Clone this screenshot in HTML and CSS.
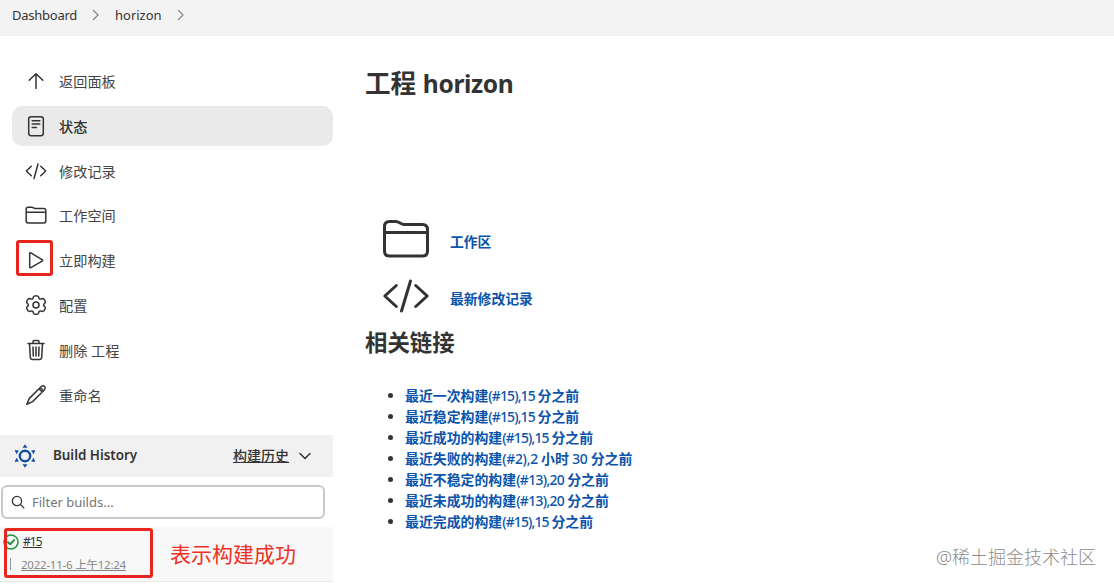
FILE: index.html
```html
<!DOCTYPE html>
<html lang="zh-CN">
<head>
  <meta charset="utf-8">
  <title>horizon [Jenkins]</title>
  <link rel="stylesheet" href="styles.css">
</head>
<body>
  <div class="breadcrumbs">
    <a class="crumb-dashboard">Dashboard</a>
    <svg class="crumb-arrow" viewBox="0 0 8 12"><path d="M1.5 1.5 6 6l-4.5 4.5"/></svg>
    <a class="crumb-project">horizon</a>
    <svg class="crumb-arrow" viewBox="0 0 8 12"><path d="M1.5 1.5 6 6l-4.5 4.5"/></svg>
  </div>

  <div class="page">
    <div class="side-panel">
      <div class="tasks">
        <a class="task">
          <svg class="icon" viewBox="0 0 24 24"><path d="M12 19.5V5M5.2 11.3 12 4.7l6.8 6.6"/></svg>
          <span>返回面板</span>
        </a>
        <a class="task active">
          <svg class="icon" viewBox="0 0 24 24"><rect x="4.7" y="2.7" width="14.6" height="19" rx="2.4"/><path d="M8.2 6.8h7.6M8.2 10h7.6M8.2 13.5h4.3"/></svg>
          <span>状态</span>
        </a>
        <a class="task">
          <svg class="icon" viewBox="0 0 24 24"><path d="M7.3 7.3 2.3 12l5 4.700M16.700 7.300l5 4.700-5 4.700M14 5l-4 14.500"/></svg>
          <span>修改记录</span>
        </a>
        <a class="task">
          <svg class="icon" viewBox="0 0 24 24"><path d="M2.200 18V6.200q0-1.900 1.900-1.900h3.800c1.500 0 1.800 1.100 3.300 1.100h8.700q1.900 0 1.900 1.900V18q0 1.900-1.900 1.900H4.100q-1.900 0-1.900-1.900zM2.200 9.300h19.600"/></svg>
          <span>工作空间</span>
        </a>
        <a class="task">
          <svg class="icon" viewBox="0 0 24 24"><path d="M5.700 5.500v13.400q0 1.300 1.200.7l11.200-6.500q1.100-.7 0-1.400L6.900 4.900q-1.200-.6-1.200.6z"/></svg>
          <span>立即构建</span>
        </a>
        <a class="task">
          <svg class="icon" viewBox="0 0 24 24"><circle cx="12" cy="12" r="3"/><path d="M9.500 3.800Q10 2.700 12 2.700t2.500 1.100l.5 1.600q.8.900 2 .5l1.700-.3q1.200 0 2.100 1.700t.2 2.700l-1.200 1.200q-.5.800 0 1.600l1.200 1.200q.7 1-.2 2.700t-2.100 1.700L17 18.100q-1.200-.4-2 .5l-.5 1.600q-.5 1.100-2.500 1.100t-2.500-1.100L9 18.600q-.8-.9-2-.5l-1.700.3q-1.200 0-2.100-1.700T3 14l1.200-1.200q.5-.8 0-1.600L3 10q-.7-1 .2-2.700t2.100-1.700l1.700.3q1.200.4 2-.5z"/></svg>
          <span>配置</span>
        </a>
        <a class="task">
          <svg class="icon" viewBox="0 0 24 24"><path d="M4 5.500h16M5.500 5.500l.8 13.800q.2 2.200 2.200 2.200h7q2 0 2.200-2.200l.8-13.800M9 5.500V3.700q0-1.100 1.100-1.100h3.800q1.100 0 1.100 1.100v1.800M9 9l.3 9M12 9v9M15 9l-.3 9"/></svg>
          <span>删除 工程</span>
        </a>
        <a class="task">
          <svg class="icon" viewBox="0 0 24 24"><path d="M16.300 4.500 5.400 15.400l-2.600 5.800 5.800-2.600L19.500 7.700M16.300 4.500l1.300-1.200q1.600-1.100 2.900.2t.2 2.900l-1.200 1.300zM15 5.800 18.200 9"/></svg>
          <span>重命名</span>
        </a>
      </div>

      <div class="history">
        <div class="history-header">
          <svg class="weather" viewBox="0 0 24 24">
            <circle cx="12" cy="12" r="5.200"/>
            <path d="M12 .2l2.500 3.600h-5zM12 23.800l2.500-3.600h-5zM1.700 6l4.200.4-2.500 3.900zM22.300 6l-4.200.4 2.500 3.900zM1.700 18l4.200-.4-2.500-3.900zM22.300 18l-4.200-.4 2.500-3.900z"/>
          </svg>
          <span class="history-title">Build History</span>
          <a class="trend">构建历史</a>
          <svg class="chevron" viewBox="0 0 12 8"><path d="M1 1.500 6 6.500l5-5"/></svg>
        </div>
        <div class="search">
          <svg class="search-icon" viewBox="0 0 16 16"><circle cx="6.800" cy="6.800" r="5.300"/><path d="m10.700 10.700 4 4"/></svg>
          <input type="text" placeholder="Filter builds...">
        </div>
        <div class="build">
          <div class="build-row">
            <svg class="success" viewBox="0 0 16 16"><circle cx="8" cy="8" r="7"/><path d="m5 8.200 2.200 2.100L11 6.100"/></svg>
            <a class="build-number">#15</a>
          </div>
          <div class="build-row">
            <span class="build-bar"></span>
            <a class="build-date">2022-11-6 上午12:24</a>
          </div>
        </div>
      </div>
    </div>

    <div class="main-panel">
      <h1>工程 <span class="project-name">horizon</span></h1>
      <div class="shortcuts">
        <svg class="icon-big" viewBox="0 0 48 48"><path d="M2.500 36V11.500q0-5 5-5h6c4 0 5 3 8.500 3h18.500q5 0 5 5V36q0 5-5 5h-33q-5 0-5-5zM2.500 17.500h43"/></svg>
        <a>工作区</a>
        <svg class="icon-big" viewBox="0 0 48 48"><path d="M14.300 13.500 2.800 24l11.500 10.500M33.700 13.500 45.200 24 33.700 34.500M28.500 9l-9 30"/></svg>
        <a>最新修改记录</a>
      </div>
      <h2>相关链接</h2>
      <ul class="permalinks">
        <li><a>最近一次构建<span class="num tight">(#15),15 </span>分之前</a></li>
        <li><a>最近稳定构建<span class="num tight">(#15),15 </span>分之前</a></li>
        <li><a>最近成功的构建<span class="num tight">(#15),15 </span>分之前</a></li>
        <li><a>最近失败的构建<span class="num">(#2),2 </span>小时<span class="num"> 30 </span>分之前</a></li>
        <li><a>最近不稳定的构建<span class="num mid">(#13),20 </span>分之前</a></li>
        <li><a>最近未成功的构建<span class="num mid">(#13),20 </span>分之前</a></li>
        <li><a>最近完成的构建<span class="num tight">(#15),15 </span>分之前</a></li>
      </ul>
    </div>
  </div>

  <div class="mark mark-run"></div>
  <div class="mark mark-build"></div>
  <div class="note">表示构建成功</div>
  <div class="watermark">@稀土掘金技术社区</div>
</body>
</html>
```

FILE: styles.css
```css
* {
  box-sizing: border-box;
}

body {
  margin: 0;
  height: 586px;
  overflow: hidden;
  position: relative;
  background: #fff;
  color: #333;
  font-family: "Noto Sans", "Noto Sans CJK SC", sans-serif;
  font-size: 14px;
}

svg {
  display: block;
  flex: none;
  fill: none;
  stroke: #333;
  stroke-width: 1.5;
  stroke-linecap: round;
  stroke-linejoin: round;
}

.breadcrumbs {
  display: flex;
  align-items: center;
  height: 36px;
  padding: 0 0 6px 12px;
  background: #f3f3f3;
  font-size: 13px;
}

.crumb-dashboard {
  width: 65px;
  letter-spacing: -0.25px;
}

.crumb-project {
  width: 46px;
}

.crumb-arrow {
  width: 8px;
  height: 12px;
  margin: 0 15px;
  stroke: #888;
  stroke-width: 1.3;
}

.crumb-project + .crumb-arrow {
  margin-left: 16px;
}

.page {
  display: flex;
}

.side-panel {
  width: 333px;
  padding-top: 25px;
}

.tasks {
  display: flex;
  flex-direction: column;
  gap: 4.8px;
  padding-left: 12px;
}

.task {
  display: flex;
  align-items: center;
  gap: 11px;
  height: 40px;
  padding-left: 12px;
  border-radius: 10px;
  color: #444;
  font-size: 14.2px;
}

.task.active {
  background: #eaeaea;
  color: #333;
  font-weight: 500;
}

.icon {
  width: 24px;
  height: 24px;
}

.history {
  margin-top: 20px;
}

.history-header {
  display: flex;
  align-items: center;
  height: 42px;
  padding: 0 22px 0 13px;
  background: #f1f1f1;
}

.weather {
  width: 24px;
  height: 24px;
  stroke: #14509e;
  stroke-width: 2.4;
}

.weather path {
  fill: #14509e;
  stroke: none;
}

.history-title {
  margin-left: 16px;
  padding-bottom: 1px;
  font-size: 13.4px;
  font-weight: 600;
}

.trend {
  margin-left: auto;
  padding-bottom: 2px;
  font-weight: 500;
  text-decoration: underline;
}

.chevron {
  width: 12px;
  height: 8px;
  margin-left: 10px;
}

.search {
  display: flex;
  align-items: center;
  width: 324px;
  height: 34px;
  margin: 8px 0 0 1px;
  padding-left: 8px;
  border: 2px solid #c5c8cc;
  border-radius: 6px;
}

.search-icon {
  width: 14px;
  height: 14px;
}

.search input {
  width: 270px;
  margin-left: 7px;
  padding: 0;
  border: 0;
  outline: 0;
  background: none;
  font: 13px "Noto Sans", sans-serif;
}

.search input::placeholder {
  color: #757575;
}

.build {
  height: 55px;
  margin-top: 8px;
  padding-top: 3px;
  border-bottom: 1px solid #e8e8e8;
  background: #f8f8f8;
}

.build-row {
  display: flex;
  align-items: center;
  height: 23px;
  padding-left: 3px;
  font-size: 12px;
}

.success {
  width: 16px;
  height: 16px;
  margin-top: 2px;
  stroke: #1e9440;
}

.success path {
  stroke-width: 2;
}

.build-number {
  margin-left: 4px;
  letter-spacing: -0.9px;
  text-decoration: underline;
}

.build-bar {
  width: 1px;
  height: 12px;
  margin: 0 10px 0 7px;
  background: #8c9f95;
}

.build-date {
  color: #858585;
  font-size: 11.5px;
  letter-spacing: -0.23px;
  text-decoration: underline;
}

.main-panel {
  padding: 29px 0 0 32px;
}

h1 {
  margin: 0;
  font-size: 25.6px;
  font-weight: 700;
  line-height: 38px;
}

.project-name {
  font-size: 24.6px;
  letter-spacing: -0.4px;
}

.shortcuts {
  display: grid;
  grid-template-columns: 48px auto;
  grid-auto-rows: 57px;
  align-items: center;
  column-gap: 20px;
  margin: 107px 0 0 17px;
}

.icon-big {
  width: 48px;
  height: 48px;
  stroke-width: 3;
}

.shortcuts a,
.permalinks a {
  color: #0b53ab;
  font-weight: 600;
}

.shortcuts a {
  padding-top: 4px;
  font-size: 13.8px;
}

h2 {
  margin: 2px 0 0;
  font-size: 22.4px;
  font-weight: 700;
  line-height: 34px;
}

.permalinks {
  margin: 25px 0 0;
  padding-left: 40px;
  line-height: 21px;
}

.permalinks a {
  font-size: 13.9px;
}

.num {
  font-weight: 500;
  letter-spacing: -0.3px;
}

.num.mid {
  letter-spacing: -0.65px;
}

.num.tight {
  letter-spacing: -0.85px;
}

.mark {
  position: absolute;
  border: 3px solid #e8261d;
  border-radius: 3px;
}

.mark-run {
  left: 16px;
  top: 240px;
  width: 37px;
  height: 36px;
}

.mark-build {
  left: 4px;
  top: 528px;
  width: 149px;
  height: 50px;
}

.note {
  position: absolute;
  left: 170px;
  top: 538px;
  color: #f03024;
  font-size: 21px;
  line-height: 32px;
}

.watermark {
  position: absolute;
  right: 18px;
  top: 544px;
  color: #8c8c8c;
  font-size: 18px;
  font-weight: 300;
  line-height: 26px;
}
```
